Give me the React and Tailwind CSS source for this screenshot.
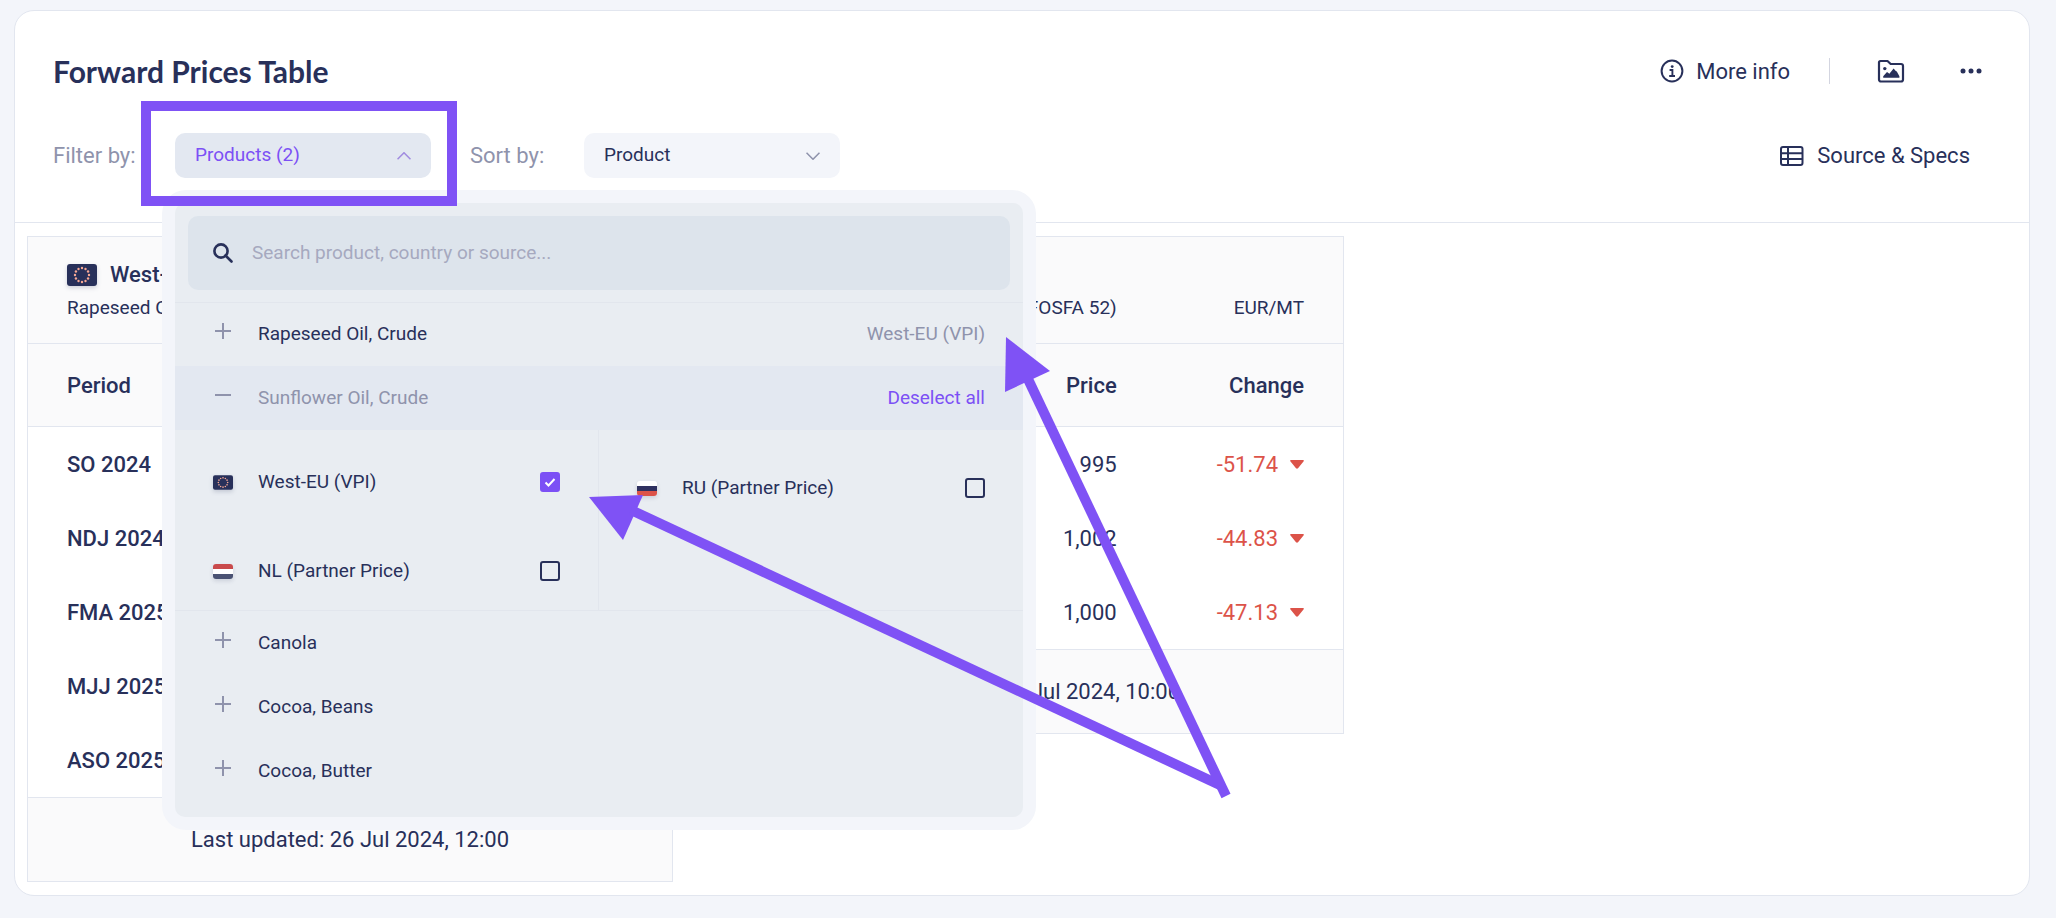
import { useState } from "react";

const FLAG_STARS = Array.from({ length: 12 }, (_, i) => {
  const a = (i * Math.PI) / 6;
  return { cx: 15 + 7 * Math.sin(a), cy: 11 - 7 * Math.cos(a) };
});

function EuFlag({ className }) {
  return (
    <svg viewBox="0 0 30 22" className={className} aria-hidden="true">
      <rect width="30" height="22" rx="3" fill="#28305a" />
      {FLAG_STARS.map((s, i) => (
        <circle key={i} cx={s.cx} cy={s.cy} r="1.2" fill="#f7a894" />
      ))}
    </svg>
  );
}

function StripeFlag({ colors }) {
  return (
    <span className="flex h-[15px] w-5 shrink-0 flex-col overflow-hidden rounded-[3px] shadow-[0_2px_4px_rgba(40,48,90,0.15)]">
      {colors.map((c) => (
        <span key={c} className={"flex-1 " + c} />
      ))}
    </span>
  );
}

function InfoIcon() {
  return (
    <svg viewBox="0 0 24 24" className="size-6" fill="none" stroke="currentColor" strokeWidth="2" aria-hidden="true">
      <circle cx="12" cy="12" r="10.4" />
      <path d="M9.6 11h2.8v5.8M9.2 17h5.8" strokeWidth="1.9" />
      <circle cx="12.2" cy="7.6" r="1.4" fill="currentColor" stroke="none" />
    </svg>
  );
}

function FolderImageIcon() {
  return (
    <svg viewBox="0 0 28 24" className="h-6 w-7" fill="none" stroke="currentColor" strokeWidth="2.2" strokeLinejoin="round" aria-hidden="true">
      <path d="M3.5 2h7l3.2 3H24a2 2 0 0 1 2 2v13.5a2 2 0 0 1-2 2H4a2 2 0 0 1-2-2V3.5A1.5 1.5 0 0 1 3.5 2z" />
      <circle cx="7.8" cy="9.6" r="1.7" fill="currentColor" stroke="none" />
      <path d="M6.2 18.8v-1.6l3.8-4.2 2.4 1.8 4.2-5.4 2.2 2.6 1 .6 2.6 4.6v1.6z" fill="currentColor" stroke="none" />
    </svg>
  );
}

function DotsIcon() {
  return (
    <svg viewBox="0 0 22 6" className="h-[6px] w-[22px]" fill="currentColor" aria-hidden="true">
      <circle cx="3" cy="3" r="2.5" />
      <circle cx="11" cy="3" r="2.5" />
      <circle cx="19" cy="3" r="2.5" />
    </svg>
  );
}

function TableIcon() {
  return (
    <svg viewBox="0 0 24 20" className="h-5 w-6" fill="none" stroke="currentColor" strokeWidth="2" aria-hidden="true">
      <rect x="1" y="1" width="21.5" height="18" rx="2" />
      <path d="M1 7.2h21.5M1 13h21.5M8 1v18" />
    </svg>
  );
}

function Chevron({ up, className }) {
  return (
    <svg viewBox="0 0 14 8" className={"h-2 w-[14px] " + className} fill="none" stroke="currentColor" strokeWidth="1.6" aria-hidden="true">
      <path d={up ? "M.5 7.3 7 .8l6.5 6.5" : "M.5.7 7 7.2 13.5.7"} />
    </svg>
  );
}

function SearchIcon() {
  return (
    <svg viewBox="0 0 20 20" className="size-5 shrink-0" fill="none" stroke="currentColor" strokeWidth="2.6" aria-hidden="true">
      <circle cx="8" cy="8" r="6.6" />
      <path d="m12.5 12.5 6 6" strokeLinecap="round" />
    </svg>
  );
}

function Expander({ open }) {
  return (
    <svg viewBox="0 0 16 16" className="mb-[6px] size-4 shrink-0" stroke="#8f93ac" strokeWidth="2" aria-hidden="true">
      <path d={open ? "M0 8h16" : "M0 8h16M8 0v16"} />
    </svg>
  );
}

function ProductRow({ name, note, open, action }) {
  return (
    <li className={"flex h-16 items-center pr-[38px] pl-10 " + (open ? "bg-[#e3e8f1]" : "")}>
      <button type="button" className={"flex items-center gap-[27px] " + (open ? "text-[#8f93ac]" : "")}>
        <Expander open={open} />
        {name}
      </button>
      {note && <span className="ml-auto text-[#8f93ac]">{note}</span>}
      {action && (
        <button type="button" className="ml-auto text-[#7c50f5]">
          {action}
        </button>
      )}
    </li>
  );
}

function RegionOption({ flag, label, initial = false }) {
  const [checked, setChecked] = useState(initial);
  return (
    <label className="flex h-[78px] items-center pr-[38px] pl-[38px]">
      {flag}
      <span className="ml-[25px]">{label}</span>
      <span className="relative ml-auto flex size-5">
        <input
          type="checkbox"
          checked={checked}
          onChange={(e) => setChecked(e.target.checked)}
          className="size-5 appearance-none rounded-[3px] border-2 border-[#28305a] checked:border-[#7c50f5] checked:bg-[#7c50f5]"
        />
        {checked && (
          <svg viewBox="0 0 20 20" className="pointer-events-none absolute inset-0 size-5" fill="none" stroke="#fff" strokeWidth="2" aria-hidden="true">
            <path d="m5.5 10.5 3 3 6-6.5" />
          </svg>
        )}
      </span>
    </label>
  );
}

function PriceTable({ region, product, unit, rows, updated }) {
  return (
    <table className="w-[646px] border-separate border-spacing-0 border border-[#e2e6ef] text-[22px]">
      <thead className="bg-[#fafafb] text-left">
        <tr>
          <th colSpan="2" className="h-[107px] border-b border-[#e2e6ef] pt-[3px] pl-[39px] font-normal">
            <span className="flex items-center gap-[13px] font-medium">
              <EuFlag className="h-[22px] w-[30px] drop-shadow-[0_2px_2px_rgba(40,48,90,0.2)]" />
              {region}
            </span>
            <span className="block text-[19px] leading-[34px] whitespace-nowrap">{product}</span>
          </th>
          <th className="border-b border-[#e2e6ef] pt-[36px] pr-[39px] text-right text-[19px] leading-[34px] font-normal">{unit}</th>
        </tr>
        <tr>
          <th className="h-[83px] border-b border-[#e2e6ef] pl-[39px] font-medium">Period</th>
          <th className="border-b border-[#e2e6ef] text-right font-medium">Price</th>
          <th className="w-[229px] border-b border-[#e2e6ef] pr-[39px] text-right font-medium">Change</th>
        </tr>
      </thead>
      <tbody>
        {rows.map(([period, price, change]) => (
          <tr key={period}>
            <th className="h-[74px] pl-[39px] text-left font-medium">{period}</th>
            <td className="text-right">{price}</td>
            <td className="pr-[39px] text-[#dc5349]">
              <span className="flex items-center justify-end gap-3">
                {change}
                <svg viewBox="0 0 14 9" className="h-[9px] w-[14px]" fill="currentColor" aria-hidden="true">
                  <path d="M1 0h12q1.5.5.5 1.5L8 8.300q-1 .8-2 0L.5 1.500Q-.5.5 1 0z" />
                </svg>
              </span>
            </td>
          </tr>
        ))}
      </tbody>
      <tfoot>
        <tr>
          <td colSpan="3" className="h-[84px] border-t border-[#e2e6ef] bg-[#fafafb] text-center">
            Last updated: {updated}
          </td>
        </tr>
      </tfoot>
    </table>
  );
}

function ProductsMenu() {
  return (
    <div className="absolute top-[57px] -left-[13px] z-10 w-[874px] rounded-3xl bg-[#f3f5fa] p-[13px] text-[19px]">
      <div className="rounded-[10px] bg-[#e9edf2] pb-[14px]">
        <div className="px-[13px] pt-[13px] pb-3 shadow-[0_1px_0_#e2e6ed]">
          <label className="flex h-[74px] items-center gap-[19px] rounded-[10px] bg-[#dde4ec] px-[25px]">
            <SearchIcon />
            <input
              type="text"
              aria-label="Search products"
              placeholder="Search product, country or source..."
              className="h-[72px] flex-1 self-start bg-transparent outline-none placeholder:text-[#a6a9bf]"
            />
          </label>
        </div>
        <ul>
          <ProductRow name="Rapeseed Oil, Crude" note="West-EU (VPI)" />
          <ProductRow name="Sunflower Oil, Crude" action="Deselect all" open />
          <li className="grid grid-cols-2 border-b border-[#e2e6ed]">
            <div className="flex flex-col gap-[11px] border-r border-[#e2e6ed] pt-[13px]">
              <RegionOption
                flag={<EuFlag className="h-[15px] w-5 shrink-0 drop-shadow-[0_2px_2px_rgba(40,48,90,0.2)]" />}
                label="West-EU (VPI)"
                initial
              />
              <RegionOption flag={<StripeFlag colors={["bg-[#c94a4c]", "bg-white", "bg-[#4a5273]"]} />} label="NL (Partner Price)" />
            </div>
            <div className="pt-[19px]">
              <RegionOption flag={<StripeFlag colors={["bg-white", "bg-[#2f3160]", "bg-[#dc5349]"]} />} label="RU (Partner Price)" />
            </div>
          </li>
          <ProductRow name="Canola" />
          <ProductRow name="Cocoa, Beans" />
          <ProductRow name="Cocoa, Butter" />
        </ul>
      </div>
    </div>
  );
}

function Annotations() {
  return (
    <svg viewBox="0 0 700 480" className="pointer-events-none absolute top-[316px] left-[560px] z-20 h-[480px] w-[700px]" fill="#7f52f5" stroke="none" aria-hidden="true">
      <path d="M14 170 68 168 48 213z" />
      <path d="M56 183 647 459" stroke="#7f52f5" strokeWidth="10" />
      <path d="M431 10 475 44 430 65z" />
      <path d="M452 50 651 469" stroke="#7f52f5" strokeWidth="10" />
    </svg>
  );
}

export default function App() {
  return (
    <div className="min-h-screen bg-[#f3f5fa] pt-[10px] pr-[26px] pb-6 pl-[14px] font-[Roboto,sans-serif] text-[#28305a]">
      <main className="relative rounded-[20px] border border-[#e2e6ef] bg-white pb-[13px]">
        <header className="border-b border-[#e2e6ef] pr-[47px] pl-[38px]">
          <div className="flex items-center pt-[38px]">
            <h1 className="font-[Lato,sans-serif] text-[30px] leading-[44px] font-bold">Forward Prices Table</h1>
            <div className="ml-auto flex items-center">
              <button type="button" className="flex items-center gap-3 text-[22px]">
                <InfoIcon />
                More info
              </button>
              <span className="mx-[39px] h-[26px] w-px bg-[#d3d5e0]" />
              <button type="button" aria-label="Save image" className="ml-2">
                <FolderImageIcon />
              </button>
              <button type="button" aria-label="More options" className="ml-[55px]">
                <DotsIcon />
              </button>
            </div>
          </div>
          <div className="flex items-center pt-10 pb-11 text-[22px]">
            <span className="w-[122px] text-[#8f93ac]">Filter by:</span>
            <div className="relative">
              <button
                type="button"
                aria-expanded="true"
                className="flex h-[45px] w-64 items-center justify-between rounded-[10px] bg-[#e3e8f1] px-5 text-[19px] text-[#7c50f5]"
              >
                Products (2)
                <Chevron up className="text-[#a18ce0]" />
              </button>
              <ProductsMenu />
              <div className="pointer-events-none absolute -top-8 -left-[34px] z-20 h-[105px] w-[316px] border-10 border-[#7f52f5]" />
            </div>
            <span className="ml-[39px] w-[114px] text-[#8f93ac]">Sort by:</span>
            <button type="button" className="flex h-[45px] w-64 items-center justify-between rounded-[10px] bg-[#f3f5fa] px-5 text-[19px]">
              Product
              <Chevron className="text-[#8f93ac]" />
            </button>
            <button type="button" className="mr-3 ml-auto flex items-center gap-[13px]">
              <TableIcon />
              Source &amp; Specs
            </button>
          </div>
        </header>
        <div className="flex items-start gap-[25px] pt-[13px] pl-3">
          <PriceTable
            region="West-EU (VPI)"
            product="Rapeseed Oil, Crude"
            unit="EUR/MT"
            updated="26 Jul 2024, 12:00"
            rows={[
              ["SO 2024", "980", "-12.50"],
              ["NDJ 2024", "985", "-11.25"],
              ["FMA 2025", "990", "-10.75"],
              ["MJJ 2025", "988", "-9.50"],
              ["ASO 2025", "960", "-8.25"],
            ]}
          />
          <PriceTable
            region="West-EU (VPI)"
            product="Sunflower Oil, Crude, Sunseed Oil (FOSFA 52)"
            unit="EUR/MT"
            updated="26 Jul 2024, 10:00"
            rows={[
              ["OND 2024", "995", "-51.74"],
              ["JFM 2025", "1,002", "-44.83"],
              ["AMJ 2025", "1,000", "-47.13"],
            ]}
          />
        </div>
        <Annotations />
      </main>
    </div>
  );
}
